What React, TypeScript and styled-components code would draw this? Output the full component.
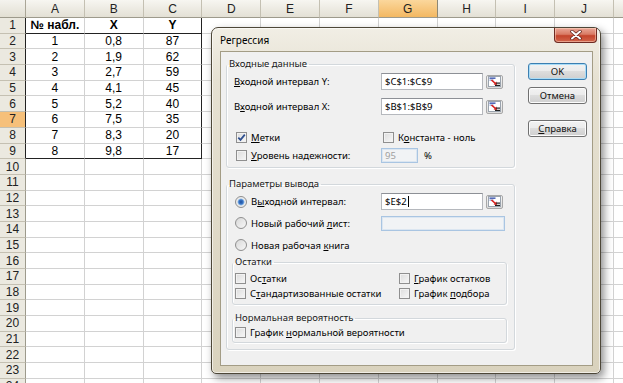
import styled, { createGlobalStyle } from "styled-components";
import { Fragment, ReactNode } from "react";

const COLS = ["A", "B", "C", "D", "E", "F", "G", "H", "I", "J", ""];
const ROWS = Array.from({ length: 24 }, (_, i) => i + 1);
const DATA = [
  ["№ набл.", "X", "Y"],
  ["1", "0,8", "87"],
  ["2", "1,9", "62"],
  ["3", "2,7", "59"],
  ["4", "4,1", "45"],
  ["5", "5,2", "40"],
  ["6", "7,5", "35"],
  ["7", "8,3", "20"],
  ["8", "9,8", "17"],
];

const GlobalStyle = createGlobalStyle`
  html, body {
    margin: 0;
    padding: 0;
  }
  body {
    width: 623px;
    height: 383px;
    overflow: hidden;
    background: #fff;
    font-family: "Liberation Sans", Arial, sans-serif;
  }
  * {
    box-sizing: border-box;
  }
`;

export default function App() {
  return (
    <Screen>
      <GlobalStyle />
      <Sheet>
        <Corner />
        {COLS.map((c, i) => (
          <ColHead key={i} $selected={c === "G"}>
            {c}
          </ColHead>
        ))}
        {ROWS.map((r) => (
          <Fragment key={r}>
            <RowHead $selected={r === 7} $edge={r <= 9}>
              {r}
            </RowHead>
            {COLS.map((c, ci) => (
              <Cell
                key={ci}
                $bold={r === 1}
                $edgeRight={r <= 9 && ci === 2}
                $edgeBottom={(r === 1 || r === 9) && ci < 3}
              >
                {r <= 9 && ci < 3 ? DATA[r - 1][ci] : ""}
              </Cell>
            ))}
          </Fragment>
        ))}
      </Sheet>

      <Dialog>
        <TitleBar>
          <Title>Регрессия</Title>
          <CloseBtn>
            <svg width="12" height="10" viewBox="0 0 12 10">
              <path d="M2 1.5 L10 8.5 M10 1.5 L2 8.5" stroke="#5a1f18" strokeWidth="3.4" strokeLinecap="round" />
              <path d="M2 1.5 L10 8.5 M10 1.5 L2 8.5" stroke="#fff" strokeWidth="2" strokeLinecap="round" />
            </svg>
          </CloseBtn>
        </TitleBar>
        <Client>
          <LeftCol>
            <Group $pad={7} $bottom={4}>
              <Legend $pad={7}>Входные данные</Legend>
              <FieldRow $top={3} $h={17}>
                <Label>
                  <U>В</U>ходной интервал Y:
                </Label>
                <TextBox $w={102}>$C$1:$C$9</TextBox>
                <RangeButton />
              </FieldRow>
              <FieldRow $top={8} $h={17}>
                <Label>
                  В<U>х</U>одной интервал X:
                </Label>
                <TextBox $w={102}>$B$1:$B$9</TextBox>
                <RangeButton />
              </FieldRow>
              <FieldRow $top={14} $h={16}>
                <Check checked>
                  <U>М</U>етки
                </Check>
                <Check>
                  К<U>о</U>нстанта - ноль
                </Check>
              </FieldRow>
              <FieldRow $top={2} $h={16}>
                <Check>
                  <U>У</U>ровень надежности:
                </Check>
                <Percent>
                  <DisabledBox $w={37}>95</DisabledBox>
                  <span>%</span>
                </Percent>
              </FieldRow>
            </Group>

            <Group $pad={7} $bottom={6} $top={10}>
              <Legend $pad={7}>Параметры вывода</Legend>
              <FieldRow $top={3} $h={17}>
                <Radio checked>
                  В<U>ы</U>ходной интервал:
                </Radio>
                <TextBox $w={102}>
                  $E$2<Caret />
                </TextBox>
                <RangeButton />
              </FieldRow>
              <FieldRow $top={5} $h={16}>
                <Radio>
                  Новый рабочий <U>л</U>ист:
                </Radio>
                <DisabledBox $w={124} />
              </FieldRow>
              <FieldRow $top={6} $h={16}>
                <Radio>
                  Новая рабочая <U>к</U>нига
                </Radio>
              </FieldRow>

              <SubGroup $pad={0} $bottom={3} $top={3}>
                <Legend $pad={0}>Остатки</Legend>
                <SubRow $top={3}>
                  <Check>
                    Ос<U>т</U>атки
                  </Check>
                  <Check>
                    <U>Г</U>рафик остатков
                  </Check>
                </SubRow>
                <SubRow $top={0}>
                  <Check>
                    С<U>т</U>андартизованные остатки
                  </Check>
                  <Check>
                    График <U>п</U>одбора
                  </Check>
                </SubRow>
              </SubGroup>

              <SubGroup $pad={0} $bottom={2} $top={7}>
                <Legend $pad={0}>Нормальная вероятность</Legend>
                <SubRow $top={1}>
                  <Check>
                    График <U>н</U>ормальной вероятности
                  </Check>
                </SubRow>
              </SubGroup>
            </Group>
          </LeftCol>

          <ButtonCol>
            <Button $default>OK</Button>
            <Button $top={7}>Отмена</Button>
            <Button $top={16}>
              <U>С</U>правка
            </Button>
          </ButtonCol>
        </Client>
      </Dialog>
    </Screen>
  );
}

function Check({ checked, children }: { checked?: boolean; children: ReactNode }) {
  return (
    <Choice>
      <CheckBox>
        {checked && (
          <svg width="9" height="9" viewBox="0 0 9 9">
            <path d="M1.3 4.6 L3.5 6.9 L7.8 1.6" fill="none" stroke="#2f4f8f" strokeWidth="1.7" />
          </svg>
        )}
      </CheckBox>
      <span>{children}</span>
    </Choice>
  );
}

function Radio({ checked, children }: { checked?: boolean; children: ReactNode }) {
  return (
    <Choice $radio>
      <RadioDot $on={checked} />
      <span>{children}</span>
    </Choice>
  );
}

function RangeButton() {
  return (
    <PickBtn>
      <svg width="13" height="11" viewBox="0 0 13 11">
        <rect x="0.5" y="0.5" width="12" height="10" fill="#fff" stroke="#9aa3ad" />
        <rect x="1.5" y="1.5" width="6" height="1.3" fill="#2b47a8" />
        <rect x="1.5" y="3.6" width="4" height="1" fill="#6c86c8" />
        <path d="M3.5 4 L8 8" stroke="#d8201c" strokeWidth="1.6" />
        <path d="M9 9 L5.6 8.4 L8.4 5.6 Z" fill="#d8201c" />
        <rect x="8" y="6.5" width="4" height="1.2" fill="#222" />
        <rect x="7" y="8.8" width="5" height="1.2" fill="#222" />
      </svg>
    </PickBtn>
  );
}

const Screen = styled.div`
  position: relative;
  width: 623px;
  height: 383px;
  overflow: hidden;
`;

const Sheet = styled.div`
  display: grid;
  grid-template-columns: 26px repeat(11, 58.8px);
  grid-template-rows: 18px repeat(24, 15.7px);
  font-size: 12px;
  color: #000;
`;

const Corner = styled.div`
  background: linear-gradient(#f4f3ee, #e2dfd3);
  border-right: 1px solid #aaa697;
  border-bottom: 1px solid #9d9a8c;
`;

const ColHead = styled.div<{ $selected?: boolean }>`
  display: flex;
  align-items: center;
  justify-content: center;
  border-right: 1px solid ${(p) => (p.$selected ? "#8d8875" : "#c4c0b2")};
  border-bottom: 1px solid #9d9a8c;
  background: ${(p) =>
    p.$selected ? "linear-gradient(#fbd79c, #f3b862)" : "linear-gradient(#f7f6f1, #e3e0d5)"};
  color: #222;
`;

const RowHead = styled.div<{ $selected?: boolean; $edge?: boolean }>`
  display: flex;
  align-items: center;
  justify-content: center;
  border-right: 1px solid ${(p) => (p.$edge ? "#222" : "#9d9a8c")};
  border-bottom: 1px solid #c4c0b2;
  background: ${(p) => (p.$selected ? "#f6c07a" : "#ebe9e0")};
  color: #222;
`;

const Cell = styled.div<{ $bold?: boolean; $edgeRight?: boolean; $edgeBottom?: boolean }>`
  display: flex;
  align-items: center;
  justify-content: center;
  border-right: 1px solid ${(p) => (p.$edgeRight ? "#222" : "#d2d2d2")};
  border-bottom: 1px solid ${(p) => (p.$edgeBottom ? "#222" : "#d2d2d2")};
  font-weight: ${(p) => (p.$bold ? 700 : 400)};
  white-space: nowrap;
`;

const Dialog = styled.div`
  position: absolute;
  left: 211px;
  top: 27px;
  width: 390px;
  height: 347px;
  display: flex;
  flex-direction: column;
  border: 1px solid #4d4738;
  border-radius: 7px 7px 5px 5px;
  background: linear-gradient(180deg, #f1eee5 0%, #e6e1d2 15%, #d9d2bd 100%);
  box-shadow: 3px 4px 8px rgba(0, 0, 0, 0.45), inset 0 0 0 1px rgba(255, 255, 255, 0.6);
  font-family: "Noto Sans", "Liberation Sans", sans-serif;
  font-size: 9.5px;
  color: #000;
`;

const TitleBar = styled.div`
  height: 23px;
  display: flex;
  align-items: flex-start;
  justify-content: space-between;
  padding-left: 8px;
`;

const Title = styled.span`
  align-self: center;
  font-size: 10px;
  margin-top: 1px;
`;

const CloseBtn = styled.div`
  width: 43px;
  height: 15px;
  margin-right: 3px;
  display: flex;
  align-items: center;
  justify-content: center;
  border: 1px solid #6d2a22;
  border-top: none;
  border-radius: 0 0 4px 4px;
  background: linear-gradient(#eaa898 0%, #d97a64 45%, #c4442c 55%, #d2664c 100%);
  box-shadow: inset 0 0 0 1px rgba(255, 220, 200, 0.5);
`;

const Client = styled.div`
  flex: 1;
  margin: 0 7px 7px 8px;
  border: 1px solid #a39c85;
  background: #f0f0f0;
  display: flex;
  gap: 13px;
  padding: 6px 0 0 5px;
`;

const LeftCol = styled.div`
  width: 289px;
  display: flex;
  flex-direction: column;
`;

const Group = styled.fieldset<{ $pad: number; $bottom: number; $top?: number }>`
  margin: ${(p) => p.$top ?? 0}px 0 0 0;
  padding: 0 0 ${(p) => p.$bottom}px ${(p) => p.$pad}px;
  border: 1px solid #d3d8dc;
  border-radius: 3px;
  box-shadow: inset 1px 1px 0 #fff, 1px 1px 0 #fff;
  min-width: 0;
`;

const SubGroup = styled(Group)`
  width: 275px;
  margin-left: -2px;
`;

const Legend = styled.legend<{ $pad: number }>`
  padding: 0 2px;
  margin-left: -${(p) => p.$pad}px;
  line-height: 12px;
  color: #1a1a1a;
`;

const FieldRow = styled.div<{ $top: number; $h: number }>`
  display: grid;
  grid-template-columns: 144px auto auto;
  justify-content: start;
  column-gap: 3px;
  align-items: center;
  height: ${(p) => p.$h}px;
  margin-top: ${(p) => p.$top}px;
`;

const SubRow = styled.div<{ $top: number }>`
  display: grid;
  grid-template-columns: 164px auto;
  align-items: center;
  height: 15px;
  margin-top: ${(p) => p.$top}px;
`;

const Label = styled.span`
  white-space: nowrap;
`;

const U = styled.span`
  text-decoration: underline;
  text-underline-offset: 1px;
`;

const Choice = styled.label<{ $radio?: boolean }>`
  display: flex;
  align-items: center;
  gap: 4px;
  padding-left: ${(p) => (p.$radio ? 1 : 2)}px;
  white-space: nowrap;
`;

const CheckBox = styled.span`
  width: 11px;
  height: 11px;
  flex: none;
  display: flex;
  align-items: center;
  justify-content: center;
  border: 1px solid #8f8f8f;
  background: linear-gradient(135deg, #dcdcdc, #f7f7f7);
  box-shadow: inset 0 0 0 1px #f2f2f2;
`;

const RadioDot = styled.span<{ $on?: boolean }>`
  width: 12px;
  height: 12px;
  flex: none;
  border-radius: 50%;
  border: 1px solid #8f8f8f;
  background: ${(p) =>
    p.$on
      ? "radial-gradient(circle, #1f4f9e 0, #3d78c8 2.2px, #9cc4ec 3.2px, #e8e8e8 3.8px, #f6f6f6 100%)"
      : "linear-gradient(135deg, #d8d8d8, #f7f7f7)"};
`;

const TextBox = styled.div<{ $w: number }>`
  width: ${(p) => p.$w}px;
  height: 17px;
  display: flex;
  align-items: center;
  padding-left: 3px;
  background: #fff;
  border: 1px solid #b5b8bd;
  border-top-color: #8d9096;
  white-space: nowrap;
`;

const Caret = styled.span`
  width: 1px;
  height: 11px;
  margin-left: 1px;
  background: #000;
`;

const DisabledBox = styled.div<{ $w: number }>`
  width: ${(p) => p.$w}px;
  height: 15px;
  display: flex;
  align-items: center;
  padding-left: 3px;
  background: #f1f3f5;
  border: 1px solid #a9c5e2;
  box-shadow: inset 0 0 0 1px #dbe6f1;
  color: #a0a0a0;
`;

const Percent = styled.div`
  display: flex;
  align-items: center;
  gap: 6px;
`;

const PickBtn = styled.div`
  width: 17px;
  height: 14px;
  display: flex;
  align-items: center;
  justify-content: center;
  border: 1px solid #a8a8a8;
  border-radius: 2px;
  background: linear-gradient(#f6f6f6, #dcdcdc);
`;

const ButtonCol = styled.div`
  display: flex;
  flex-direction: column;
  padding-top: 5px;
`;

const Button = styled.div<{ $default?: boolean; $top?: number }>`
  width: 59px;
  height: 17px;
  margin-top: ${(p) => p.$top ?? 0}px;
  display: flex;
  align-items: center;
  justify-content: center;
  border: 1px solid ${(p) => (p.$default ? "#3c7fb1" : "#707070")};
  border-radius: 3px;
  background: linear-gradient(#f2f2f2 0%, #ebebeb 49%, #dddddd 50%, #cfcfcf 100%);
  box-shadow: inset 0 0 0 1px ${(p) => (p.$default ? "#a9dcf7" : "#fcfcfc")};
  color: #111;
`;
